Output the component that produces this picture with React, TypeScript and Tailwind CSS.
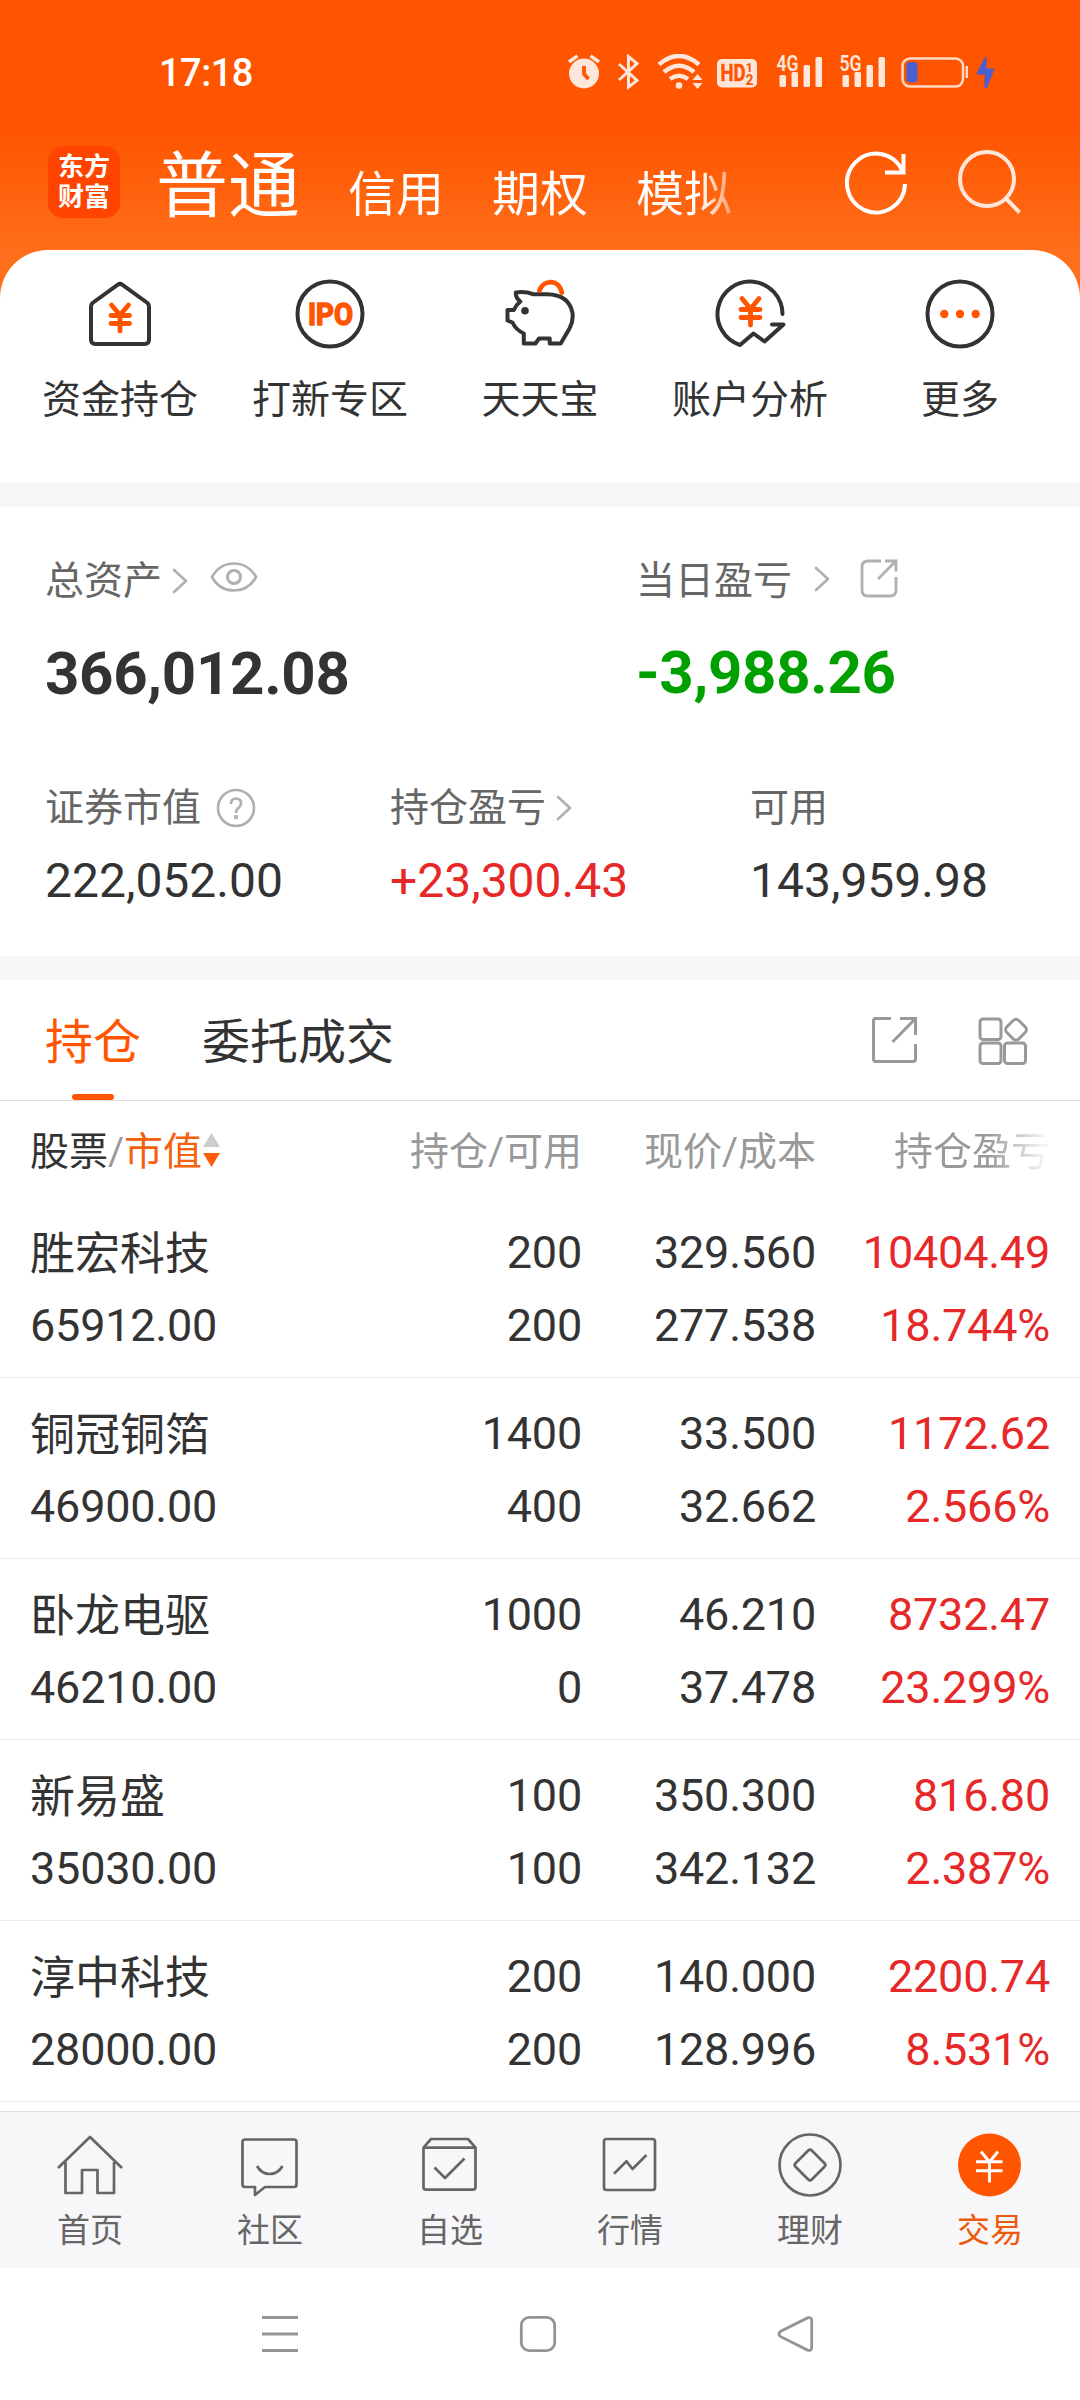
import type { ReactNode } from 'react'

const shortcuts = [
  { label: '资金持仓', icon: <HouseIcon /> },
  { label: '打新专区', icon: <IpoIcon /> },
  { label: '天天宝', icon: <PigIcon /> },
  { label: '账户分析', icon: <AnalysisIcon /> },
  { label: '更多', icon: <MoreIcon /> },
]

const stocks = [
  { name: '胜宏科技', value: '65912.00', hold: '200', usable: '200', price: '329.560', cost: '277.538', profit: '10404.49', rate: '18.744%' },
  { name: '铜冠铜箔', value: '46900.00', hold: '1400', usable: '400', price: '33.500', cost: '32.662', profit: '1172.62', rate: '2.566%' },
  { name: '卧龙电驱', value: '46210.00', hold: '1000', usable: '0', price: '46.210', cost: '37.478', profit: '8732.47', rate: '23.299%' },
  { name: '新易盛', value: '35030.00', hold: '100', usable: '100', price: '350.300', cost: '342.132', profit: '816.80', rate: '2.387%' },
  { name: '淳中科技', value: '28000.00', hold: '200', usable: '200', price: '140.000', cost: '128.996', profit: '2200.74', rate: '8.531%' },
]

function QuickIcon({ children }: { children: ReactNode }) {
  return (
    <svg className="size-[70px] overflow-visible" viewBox="0 0 70 70" fill="none" stroke="#333" strokeWidth="4" strokeLinecap="round" strokeLinejoin="round">
      {children}
    </svg>
  )
}

function HouseIcon() {
  return (
    <QuickIcon>
      <path d="M32.5 5.8Q35 4 37.5 5.8L62.5 24Q64 25.500 64 28V60.500Q64 65 59.500 65H10.500Q6 65 6 60.500V28Q6 25.500 7.500 24Z" />
      <path d="M26.500 26L35 36L43.500 26M26 36.500H44.500M26 44.500H44.500M35 36V52" stroke="#ff5500" strokeWidth="4.800" />
    </QuickIcon>
  )
}

function IpoIcon() {
  return (
    <QuickIcon>
      <circle cx="35" cy="35" r="32.500" />
      <text x="13" y="46" fill="#ff5500" stroke="#ff5500" strokeWidth="1.500" fontFamily="Roboto, sans-serif" fontSize="31.500" fontWeight="700" textLength="45" lengthAdjust="spacingAndGlyphs">IPO</text>
    </QuickIcon>
  )
}

function PigIcon() {
  return (
    <QuickIcon>
      <path d="M28.700 15.300Q20 12 10.800 13.500Q10.500 19 15.300 22.500Q11 26 8.800 31H2.500V41.500L7.500 43.500Q11 51 18.800 54.500V64.500H30.500L34 59.500H44.700V64.500H55.700L64.500 49.500Q68.500 42 67.500 34Q64 15.500 42 15.200Z" />
      <circle cx="20" cy="31.700" r="3.800" fill="#333" stroke="none" />
      <path d="M34.500 11.500C38 0.500 54 -0.500 56.800 13.500" stroke="#ff5500" strokeWidth="4.800" />
    </QuickIcon>
  )
}

function AnalysisIcon() {
  return (
    <QuickIcon>
      <path d="M67.500 35A32.500 32.500 0 1 0 25 66L38.500 54.500L49.500 62.500L68.500 45.500H57" />
      <path d="M27 19.500L35.500 30L44 19.500M26 30.500H45M26 38.500H45M35.500 30V46" stroke="#ff5500" strokeWidth="4.800" />
    </QuickIcon>
  )
}

function MoreIcon() {
  return (
    <QuickIcon>
      <circle cx="35" cy="35" r="32.500" />
      <g fill="#ff5500" stroke="none">
        <circle cx="19.300" cy="35" r="4.200" />
        <circle cx="35" cy="35" r="4.200" />
        <circle cx="50.700" cy="35" r="4.200" />
      </g>
    </QuickIcon>
  )
}

function Chevron({ className = '' }: { className?: string }) {
  return (
    <svg className={`h-[26px] w-4 ${className}`} viewBox="0 0 16 26" fill="none" stroke="#b0b0b0" strokeWidth="2.700" strokeLinecap="round" strokeLinejoin="round">
      <path d="M2 2L14 13L2 24" />
    </svg>
  )
}

function Signal({ label }: { label: string }) {
  return (
    <svg className="-mt-2 h-11 w-[47px] overflow-visible" viewBox="0 -8 47 44" fill="#ffe6da">
      <text x="0.500" y="17" fontFamily="Roboto, sans-serif" fontSize="22" fontWeight="600" textLength="22" lengthAdjust="spacingAndGlyphs">{label}</text>
      <rect x="3.500" y="21" width="6.500" height="12" rx="1.500" />
      <rect x="15.500" y="18" width="6.500" height="15" rx="1.500" />
      <rect x="27.500" y="11" width="6.500" height="22" rx="1.500" />
      <rect x="39.500" y="3" width="6.500" height="30" rx="1.500" />
    </svg>
  )
}

function StatusBar() {
  return (
    <div className="flex h-[108px] items-start pt-[53px] pl-[159px] text-white">
      <span className="w-[408px] text-[38px] leading-10 font-medium tracking-[-0.5px]">17:18</span>
      <svg className="mt-px h-9 w-[34px]" viewBox="0 0 34 36" fill="none" stroke="#ffe6da">
        <circle cx="17" cy="19.500" r="15" fill="#ffe6da" stroke="none" />
        <path d="M2 8L10.500 1.800M23.500 1.800L32 8" strokeWidth="3.500" />
        <path d="M17 12V20L21.500 25" stroke="#ff5500" strokeWidth="3.800" />
      </svg>
      <svg className="mt-px ml-4 h-9 w-[22px]" viewBox="0 0 22 36" fill="none" stroke="#ffe6da" strokeWidth="3">
        <path d="M2 10L20 26.500L11.500 33V2.500L20 9.500L2 26" />
      </svg>
      <svg className="mt-px ml-[18px] h-9 w-[46px]" viewBox="0 0 46 36" fill="none" stroke="#ffe6da" strokeWidth="4.500">
        <path d="M2 10.500Q22 -6.500 42 10.500M7 18Q22 5.500 37 18M13 25Q22 18.500 31 25" />
        <circle cx="22" cy="31.500" r="3.300" fill="#ffe6da" stroke="none" />
        <path d="M35.500 26L40.500 20L45.500 26ZM35.500 29L40.500 35L45.500 29Z" fill="#ffe6da" stroke="none" />
      </svg>
      <svg className="mt-px ml-[14px] h-9 w-10" viewBox="0 0 40 36">
        <rect y="5" width="40" height="28.500" rx="5" fill="#ffe6da" />
        <g fill="#ff5500" fontFamily="Roboto, sans-serif" fontWeight="700">
          <text x="3.500" y="27" fontSize="23" textLength="25" lengthAdjust="spacingAndGlyphs" stroke="#ff5500" strokeWidth="0.600">HD</text>
          <text x="28.500" y="17.500" fontSize="13">1</text>
          <text x="28.500" y="30.500" fontSize="14">2</text>
        </g>
      </svg>
      <div className="mt-px ml-[19px] flex gap-4">
        <Signal label="4G" />
        <Signal label="5G" />
      </div>
      <svg className="mt-px ml-[15px] h-9 w-[94px]" viewBox="0 0 94 36" fill="none">
        <rect x="1.500" y="4.500" width="60.500" height="28" rx="7.500" stroke="#ffd9c4" strokeWidth="2.500" />
        <rect x="5.500" y="8" width="11" height="20.500" rx="4" fill="#4a5fd0" />
        <path d="M65.800 12V24" stroke="#ffd9c4" strokeWidth="2.500" />
        <path d="M84 3L75 20.500H83.500V34H86L93.500 14.500H85.500V3Z" fill="#4a5fd0" />
      </svg>
    </div>
  )
}

function Header() {
  return (
    <div className="flex h-[142px] text-white">
      <div className="mt-[38px] ml-12 flex h-[72px] w-[72px] flex-col items-center justify-center rounded-[15px] bg-[#ff4400] text-[26px] leading-[30px] font-bold">
        <span>东方</span>
        <span>财富</span>
      </div>
      <div className="ml-9 flex w-[580px] items-baseline gap-12 bg-[linear-gradient(90deg,#fff_543px,rgba(255,255,255,0.35)_578px)] bg-clip-text pt-[29px] leading-[100px] whitespace-nowrap text-transparent">
        <span className="text-[72px]">普通</span>
        <span className="text-5xl">信用</span>
        <span className="text-5xl">期权</span>
        <span className="text-5xl">模拟</span>
      </div>
      <svg className="mt-[42px] ml-[109px] h-[66px] w-[66px]" viewBox="0 0 66 66" fill="none" stroke="#fff" strokeWidth="4">
        <path d="M60 34A29 29.500 0 1 1 57.500 21M58.500 4V22.500H40" />
      </svg>
      <svg className="mt-[42px] ml-[45px] h-[66px] w-[66px]" viewBox="0 0 66 66" fill="none" stroke="#ffe6da" strokeWidth="4">
        <circle cx="31" cy="29" r="27" />
        <path d="M49.500 48L63.500 62.500" />
      </svg>
    </div>
  )
}

function Assets() {
  return (
    <section className="h-[449px] pt-[54px] pl-[45px] text-[39px] leading-10 text-[#666]">
      <div className="flex">
        <div className="w-[591px]">
          <div className="flex items-center">
            总资产
            <Chevron className="ml-[10px]" />
            <svg className="-mt-2 ml-[22px] h-8 w-[48px]" viewBox="0 0 48 32" fill="none" stroke="#b0b0b0" strokeWidth="2.700">
              <path d="M2 16C12 -2 36 -2 46 16C36 34 12 34 2 16Z" strokeLinejoin="round" />
              <circle cx="24" cy="16" r="6.500" strokeWidth="3" />
            </svg>
          </div>
          <div className="mt-[43px] text-[60px] leading-[60px] font-bold tracking-[-0.3px] text-[#333]">366,012.08</div>
        </div>
        <div>
          <div className="flex items-center">
            当日盈亏
            <Chevron className="-mt-1 ml-[22px]" />
            <svg className="-mt-1 ml-[29px] h-10 w-10" viewBox="0 0 40 40" fill="none" stroke="#b0b0b0" strokeWidth="2.800">
              <path d="M22 2H9Q3 2 3 8V31Q3 37 9 37H31Q37 37 37 31V18M26 2H37V12.500M37 2L19 20" />
            </svg>
          </div>
          <div className="mt-[42px] text-[60px] leading-[60px] font-bold tracking-[-0.3px] text-[#00a000]">-3,988.26</div>
        </div>
      </div>
      <div className="mt-[84px] flex">
        <div className="w-[345px]">
          <div className="flex items-center">
            证券市值
            <svg className="ml-[15px] size-10" viewBox="0 0 40 40" fill="none" stroke="#b0b0b0" strokeWidth="2.700">
              <circle cx="20" cy="20" r="18" />
              <path d="M15 16Q15 10.500 20 10.500Q25 10.500 25 15.500Q25 18 22.500 19.800Q20 21.500 20 25" />
              <circle cx="20" cy="29" r="2.200" fill="#b0b0b0" stroke="none" />
            </svg>
          </div>
          <div className="mt-[29px] text-5xl leading-[48px] text-[#333]">222,052.00</div>
        </div>
        <div className="w-[360px]">
          <div className="flex items-center">
            持仓盈亏
            <Chevron className="ml-[10px]" />
          </div>
          <div className="mt-[29px] text-5xl leading-[48px] text-[#e62828]">+23,300.43</div>
        </div>
        <div>
          <div>可用</div>
          <div className="mt-[29px] text-5xl leading-[48px] text-[#333]">143,959.98</div>
        </div>
      </div>
    </section>
  )
}

function Tabs() {
  return (
    <div className="flex h-[121px] items-center border-b border-[#dedede] pl-[45px] text-5xl leading-[120px]">
      <div className="relative pt-1.5 text-[#ff5500]">
        持仓
        <div className="absolute bottom-[3px] left-[27px] h-1.5 w-[42px] rounded-full bg-[#ff5500]" />
      </div>
      <div className="ml-[61px] pt-1.5 text-[#333]">委托成交</div>
      <svg className="ml-[476px] size-[50px]" viewBox="0 0 50 50" fill="none" stroke="#999" strokeWidth="3">
        <path d="M21 3.500H6Q3.500 3.500 3.500 6V44Q3.500 46.500 6 46.500H43Q45.500 46.500 45.500 44V29M30 3.500H45.500V20M45.500 3.500L22.500 27" />
      </svg>
      <svg className="ml-[57px] size-[52px]" viewBox="0 0 52 52" fill="none" stroke="#999" strokeWidth="3">
        <rect x="3" y="5" width="21" height="20.500" rx="3" />
        <rect x="3" y="29" width="21" height="20.500" rx="3" />
        <rect x="27.500" y="29" width="21" height="20.500" rx="3" />
        <rect x="30.500" y="7.200" width="17" height="17" rx="4" transform="rotate(45 39 15.700)" />
      </svg>
    </div>
  )
}

function Holdings() {
  return (
    <section>
      <div className="grid h-24 grid-cols-[270px_282px_234px_234px] items-center pt-1.5 pl-[30px] text-right text-[39px] leading-[60px] text-[#999]">
        <div className="flex items-center">
          <span className="text-[#333]">股票</span>
          <span>/</span>
          <span className="text-[#f4600c]">市值</span>
          <svg className="-mt-1 ml-px h-9 w-[17px]" viewBox="0 0 17 36">
            <path d="M8.500 1L17 15H0Z" fill="#ccc" />
            <path d="M0 21H17L8.500 35Z" fill="#ff5d0c" />
          </svg>
        </div>
        <div>持仓/可用</div>
        <div>现价/成本</div>
        <div className="bg-[linear-gradient(90deg,#999_172px,rgba(153,153,153,0.1)_228px)] bg-clip-text text-transparent">持仓盈亏</div>
      </div>
      {stocks.map((stock) => (
        <div className="grid h-[181px] grid-cols-[270px_282px_234px_234px] border-b border-[#ececec] pt-[19px] pl-[30px] text-right text-[45px] leading-[73px] tracking-[-0.22px] text-[#333]" key={stock.name}>
          <div className="text-left">
            <div className="-mb-0.5 pt-0.5 tracking-normal">{stock.name}</div>
            <div>{stock.value}</div>
          </div>
          <div>
            <div>{stock.hold}</div>
            <div>{stock.usable}</div>
          </div>
          <div>
            <div>{stock.price}</div>
            <div>{stock.cost}</div>
          </div>
          <div className="text-[#e62828]">
            <div>{stock.profit}</div>
            <div>{stock.rate}</div>
          </div>
        </div>
      ))}
    </section>
  )
}

function NavItem({ label, active, children }: { label: string; active?: boolean; children: ReactNode }) {
  return (
    <div className={`flex w-[180px] flex-col items-center pt-5 ${active ? 'text-[#ee5a0c]' : 'text-[#666]'}`}>
      <svg className="size-[66px]" viewBox="0 0 66 66" fill="none" stroke="#666" strokeWidth="2.700" strokeLinejoin="round">
        {children}
      </svg>
      <span className="mt-4 text-[33px] leading-[34px]">{label}</span>
    </div>
  )
}

function BottomNav() {
  return (
    <nav className="flex h-[157px] border-t border-[#dedede] bg-[#f7f7fa]">
      <NavItem label="首页">
        <path d="M1 36L33 5L65 36M8.500 30V61H25V38H40.500V61H57V30" />
      </NavItem>
      <NavItem label="社区">
        <path d="M8 7.500H57Q59.500 7.500 59.500 10V52.500Q59.500 55 57 55H28L18 63V55H8Q5.500 55 5.500 52.500V10Q5.500 7.500 8 7.500Z" />
        <path d="M20 34Q24.500 42 32.700 42Q41 42 45.500 34" />
      </NavItem>
      <NavItem label="自选">
        <path d="M6.500 15.700L14 7H51L58.500 15.700V55Q58.500 57.700 56 57.700H9Q6.500 57.700 6.500 55ZM6.500 15.700H58.500M17.500 35.500L28 46L47.500 26.500" />
      </NavItem>
      <NavItem label="行情">
        <rect x="7" y="7" width="51" height="51" rx="2.500" />
        <path d="M17 41.700L29.500 29.300L35.500 37L49.500 23" />
      </NavItem>
      <NavItem label="理财">
        <circle cx="33" cy="33" r="30.500" />
        <rect x="21.500" y="21.500" width="23" height="23" rx="2.500" transform="rotate(45 33 33)" />
      </NavItem>
      <NavItem label="交易" active>
        <circle cx="32.500" cy="33" r="31.500" fill="#ff5500" stroke="none" />
        <path d="M24 19.500L32.500 30L41 19.500M19 29.700H45.500M19 38.700H45.500M32.500 30V50.500" stroke="#fff" strokeWidth="2.900" />
      </NavItem>
    </nav>
  )
}

function SystemNav() {
  return (
    <div className="flex h-[132px] items-center pl-[261px]">
      <svg className="size-[38px]" viewBox="0 0 38 38" stroke="#949494" strokeWidth="3">
        <path d="M1 2.500H37M1 19H37M1 35.500H37" />
      </svg>
      <svg className="ml-[220px] size-[38px]" viewBox="0 0 38 38" fill="none" stroke="#949494" strokeWidth="2.800">
        <rect x="2.300" y="2.300" width="33.400" height="33.400" rx="8" />
      </svg>
      <svg className="ml-[220px] size-[38px]" viewBox="0 0 38 38" fill="none" stroke="#949494" strokeWidth="2.800">
        <path d="M3.300 16.600L30.500 2.900Q34.500 1.500 34.700 5.500V32.500Q34.500 36.500 30.500 35.100L3.300 21.400Q0.500 19 3.300 16.600Z" />
      </svg>
    </div>
  )
}

export default function App() {
  return (
    <main className="h-[2400px] w-[1080px] overflow-hidden bg-white font-[Roboto,'Noto_Sans_CJK_SC',sans-serif]" lang="zh-CN">
      <div className="bg-[linear-gradient(#ff5500_130px,#ff6e1a_250px)]">
        <StatusBar />
        <Header />
        <section className="flex h-[233px] rounded-t-[48px] bg-white px-[15px] pt-[29px]">
          {shortcuts.map((item) => (
            <div className="flex w-[210px] flex-col items-center text-[39px] text-[#333]" key={item.label}>
              {item.icon}
              <span className="mt-[31px] leading-10">{item.label}</span>
            </div>
          ))}
        </section>
      </div>
      <div className="h-6 bg-[#f7f7fa]" />
      <Assets />
      <div className="h-6 bg-[#f7f7fa]" />
      <Tabs />
      <Holdings />
      <div className="h-[9px]" />
      <BottomNav />
      <SystemNav />
    </main>
  )
}
